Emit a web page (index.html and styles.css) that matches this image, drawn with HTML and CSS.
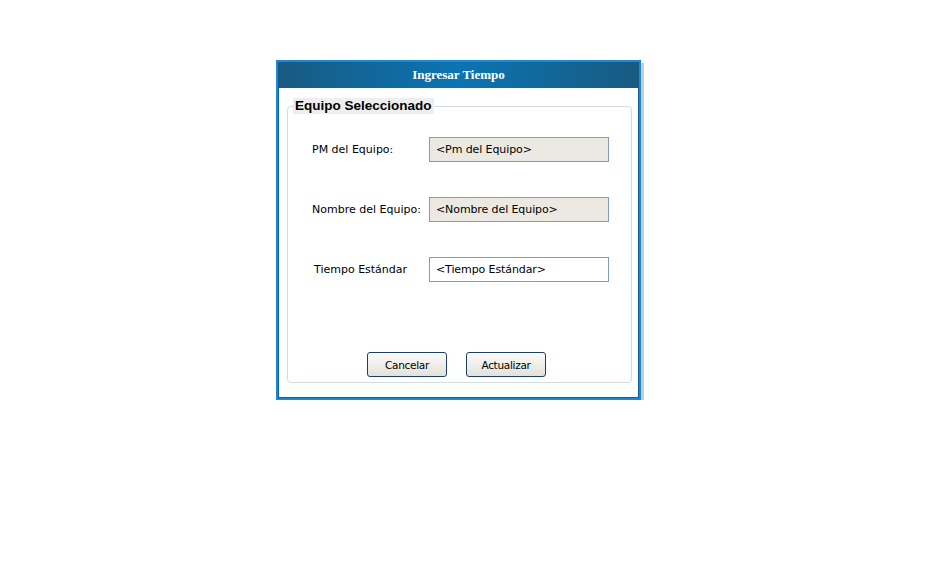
FILE: index.html
```html
<!DOCTYPE html>
<html lang="es">
<head>
<meta charset="utf-8">
<title>Ingresar Tiempo</title>
<link rel="stylesheet" href="styles.css">
</head>
<body>
<div class="dialog">
  <div class="dialog-header">Ingresar Tiempo</div>
  <div class="dialog-body">
    <fieldset class="group">
      <legend class="group-title">Equipo Seleccionado</legend>
      <div class="form">
        <label class="lbl">PM del Equipo:</label>
        <input class="field readonly" type="text" value="&lt;Pm del Equipo&gt;" readonly>
        <label class="lbl">Nombre del Equipo:</label>
        <input class="field readonly" type="text" value="&lt;Nombre del Equipo&gt;" readonly>
        <label class="lbl lbl-indent">Tiempo Estándar</label>
        <input class="field" type="text" value="&lt;Tiempo Estándar&gt;">
      </div>
      <div class="actions">
        <button class="btn" type="button">Cancelar</button>
        <button class="btn" type="button">Actualizar</button>
      </div>
    </fieldset>
  </div>
</div>
</body>
</html>
```
FILE: styles.css
```css
html, body {
  margin: 0;
  padding: 0;
  background: #ffffff;
}
body {
  padding: 60px 0 0 276px;
  font-family: "DejaVu Sans", Verdana, sans-serif;
  font-size: 11px;
  color: #000;
}
.dialog {
  box-sizing: border-box;
  width: 365px;
  height: 340px;
  border: 2px solid #1b8ad6;
  box-shadow: inset 0 0 0 1px #0d5f9c, 3px 3px 0 #cccccc;
  background: #ffffff;
  display: flex;
  flex-direction: column;
}
.dialog-header {
  height: 26px;
  line-height: 26px;
  text-align: center;
  color: #ffffff;
  font-family: "Liberation Serif", "Times New Roman", serif;
  font-weight: bold;
  font-size: 13px;
  background: linear-gradient(to right, #185a82 0%, #0b74b2 50%, #185a82 100%);
}
.dialog-body {
  flex: 1;
  padding: 10px 0 0 9px;
  background: #fff;
  margin: 0 1px 1px 1px;
}
.group {
  box-sizing: border-box;
  width: 345px;
  height: 285px;
  margin: 0 0 0 -1px;
  padding: 23px 0 0 5px;
  border: 1px solid #d3dbe3;
  border-radius: 4px;
}
.group-title {
  padding: 0 2px;
  height: 16px;
  line-height: 16px;
  background: #eeeeee;
  font-family: "Liberation Sans", Arial, sans-serif;
  font-weight: bold;
  font-size: 13.5px;
  color: #000;
}
.form {
  display: grid;
  grid-template-columns: 117px 180px;
  grid-auto-rows: 25px;
  row-gap: 35px;
  padding-left: 19px;
  align-items: center;
}
.lbl {
  font-size: 11px;
  color: #000;
}
.lbl-indent {
  padding-left: 2px;
}
.field {
  box-sizing: border-box;
  width: 180px;
  height: 25px;
  margin: 0;
  border: 1px solid #7f9db9;
  padding: 0 6px;
  font-family: "DejaVu Sans", Verdana, sans-serif;
  font-size: 11px;
  letter-spacing: -0.1px;
  color: #000;
  background: #ffffff;
  outline: none;
}
.field.readonly {
  background: #ebe9e2;
}
.actions {
  display: flex;
  gap: 19px;
  padding-left: 74px;
  margin-top: 70px;
}
.btn {
  box-sizing: border-box;
  width: 80px;
  height: 25px;
  border: 1px solid #1d3e63;
  border-radius: 3px;
  background: linear-gradient(#fbfbf9, #e3e1da);
  font-family: "DejaVu Sans", Verdana, sans-serif;
  font-size: 10.5px;
  letter-spacing: -0.3px;
  color: #000;
  padding: 0;
}
```
